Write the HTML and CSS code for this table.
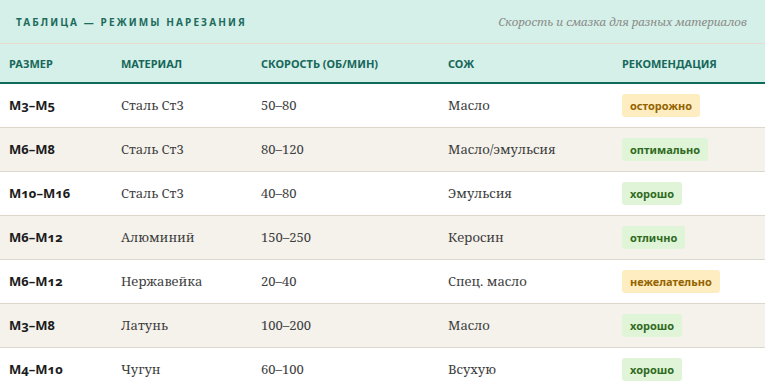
FILE: index.html
```
<!DOCTYPE html>
<html lang="ru">
<head>
<meta charset="utf-8">
<link rel="stylesheet" href="styles.css">
</head>
<body>
<div class="panel">
  <div class="titlebar">
    <div class="title">Таблица — режимы нарезания</div>
    <div class="subtitle">Скорость и смазка для разных материалов</div>
  </div>
  <table class="grid">
    <colgroup>
      <col class="c1"><col class="c2"><col class="c3"><col class="c4"><col class="c5">
    </colgroup>
    <thead>
      <tr><th>Размер</th><th>Материал</th><th>Скорость (об/мин)</th><th>СОЖ</th><th>Рекомендация</th></tr>
    </thead>
    <tbody>
      <tr><td class="size">M3–M5</td><td>Сталь Ст3</td><td>50–80</td><td>Масло</td><td><span class="badge warn">осторожно</span></td></tr>
      <tr><td class="size">M6–M8</td><td>Сталь Ст3</td><td>80–120</td><td>Масло/эмульсия</td><td><span class="badge ok">оптимально</span></td></tr>
      <tr><td class="size">M10–M16</td><td>Сталь Ст3</td><td>40–80</td><td>Эмульсия</td><td><span class="badge ok">хорошо</span></td></tr>
      <tr><td class="size">M6–M12</td><td>Алюминий</td><td>150–250</td><td>Керосин</td><td><span class="badge ok">отлично</span></td></tr>
      <tr><td class="size">M6–M12</td><td>Нержавейка</td><td>20–40</td><td>Спец. масло</td><td><span class="badge warn">нежелательно</span></td></tr>
      <tr><td class="size">M3–M8</td><td>Латунь</td><td>100–200</td><td>Масло</td><td><span class="badge ok">хорошо</span></td></tr>
      <tr><td class="size">M4–M10</td><td>Чугун</td><td>60–100</td><td>Всухую</td><td><span class="badge ok">хорошо</span></td></tr>
    </tbody>
  </table>
</div>
</body>
</html>
```
FILE: styles.css
```
* { box-sizing: border-box; }
html, body { margin: 0; padding: 0; background: #fff; }
body { font-family: "Noto Serif", "DejaVu Serif", serif; }

.panel { width: 765px; }

.titlebar {
  display: flex;
  justify-content: space-between;
  align-items: center;
  height: 44px;
  padding: 0 18px 0 16px;
  background: #d4f0e9;
  border-bottom: 1px solid #e6dccf;
}
.title {
  font-family: "Noto Sans", sans-serif;
  font-weight: 700;
  font-size: 10px;
  letter-spacing: 2.1px;
  text-transform: uppercase;
  color: #1e6b5c;
}
.subtitle {
  font-style: italic;
  font-size: 11.5px;
  color: #8a8a86;
}

.grid {
  width: 765px;
  border-collapse: collapse;
  table-layout: fixed;
}
.c1 { width: 112px; }
.c2 { width: 140px; }
.c3 { width: 187px; }
.c4 { width: 174px; }
.c5 { width: 152px; }

.grid thead th {
  background: #d4f0e9;
  height: 39px;
  padding: 0 0 0 9px;
  text-align: left;
  font-family: "Noto Sans", sans-serif;
  font-stretch: condensed;
  font-weight: 700;
  font-size: 11px;
  text-transform: uppercase;
  color: #17675a;
  border-bottom: 2px solid #0f6a59;
}

.grid td {
  height: 44px;
  padding: 0 0 0 9px;
  font-size: 13px;
  color: #3e3e3e;
  border-bottom: 1px solid #ddd8cd;
  vertical-align: middle;
}
.grid tbody tr:nth-child(even) td { background: #f5f2ec; }

.grid td.size {
  font-family: "Noto Sans", sans-serif;
  font-weight: 700;
  font-variant-numeric: oldstyle-nums;
  color: #1c1c1c;
}

.badge {
  display: inline-block;
  padding: 4px 8px;
  border-radius: 3px;
  font-family: "Noto Sans", sans-serif;
  font-weight: 700;
  font-size: 11px;
  line-height: 15px;
}
.warn { background: #fdedc0; color: #946300; }
.ok { background: #e0f4d7; color: #2f6a22; }
```
